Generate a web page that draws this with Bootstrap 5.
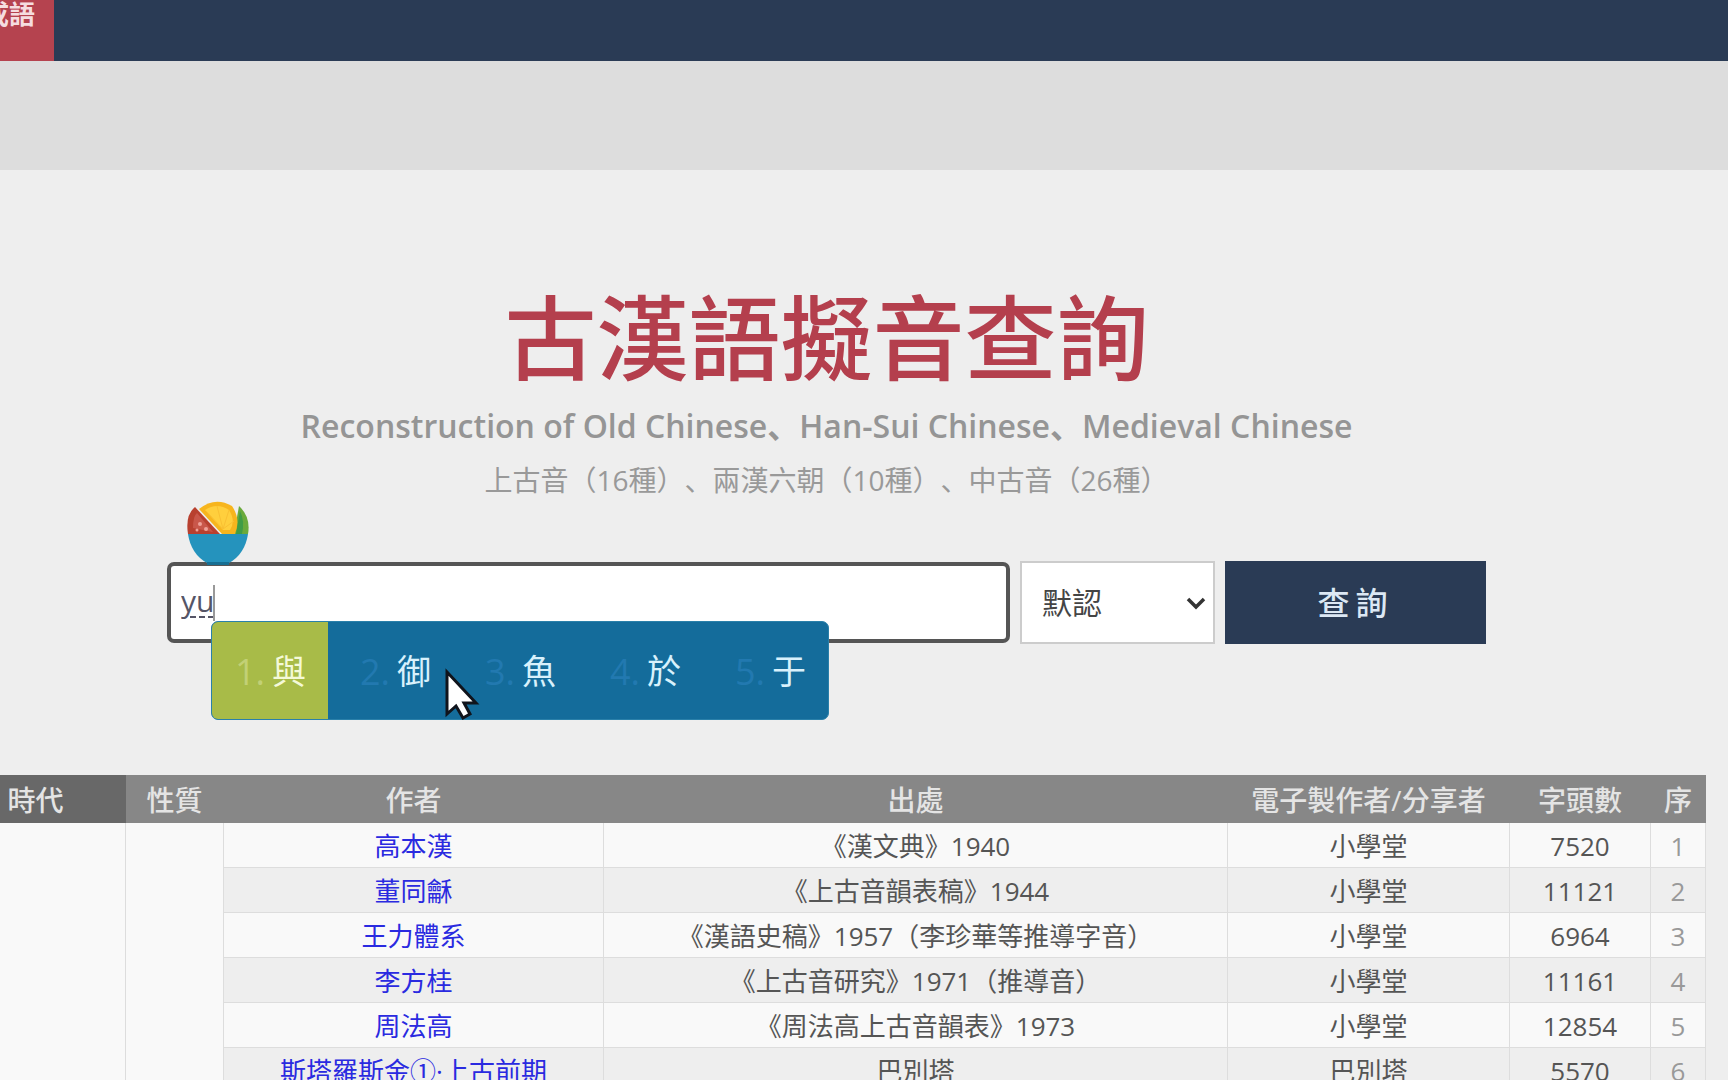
<!DOCTYPE html>
<html lang="zh-CN">
<head>
<meta charset="utf-8">
<meta name="viewport" content="width=device-width, initial-scale=1">
<title>古漢語擬音查詢</title>
<link href="https://cdn.jsdelivr.net/npm/bootstrap@5.3.0/dist/css/bootstrap.min.css" rel="stylesheet">
<style>
  body { background: #eee; color: #555; font-family: "Open Sans", "Noto Sans CJK SC", sans-serif; font-size: 26px; text-spacing-trim: space-all; }
  .topbar { background: #2a3b55; height: 61px; }
  .tab-current { background: #b5434f; color: #f5dde0; font-weight: 700; line-height: 28px; padding: 0 19px 33px 0; margin-left: -17px; }
  .subbar { background: #ddd; height: 109px; }
  .hero { padding: 108px 242px 0 167px; }
  .site-title { color: #b43f4d; font-size: 92px; line-height: 120px; font-weight: 500; }
  .site-sub { color: #959595; font-size: 32px; line-height: 56px; font-weight: 600; }
  .site-count { color: #999; font-size: 28px; line-height: 52px; }
  .search { margin: 55px 0 131px; height: 83px; gap: 10px; }
  .search .form-control { font-size: 30px; color: #556; border: 4px solid #555; border-radius: 7px; padding: 0 10px 4px; height: 81px; text-decoration: underline dashed 2px; text-underline-offset: 4px; }
  .search .form-select { width: 195px; font-size: 30px; color: #444; border: 2px solid #ccc; border-radius: 0; padding: 0 20px; background-image: url("data:image/svg+xml,%3csvg xmlns='http://www.w3.org/2000/svg' viewBox='0 0 20 20'%3e%3cpath d='M2 6l8 8 8-8' fill='none' stroke='%23333' stroke-width='3.500'/%3e%3c/svg%3e"); background-position: right 7px center; background-size: 20px 20px; }
  .search .btn { width: 261px; background: #2a3b55; color: #dce8f4; border-radius: 0; font-size: 32px; font-weight: 500; letter-spacing: 6px; }
  .bowl { left: 19px; top: -60px; width: 63px; height: 64px; }
  .text-caret { left: 46px; top: 24px; width: 2px; height: 36px; background: #999; }
  .ime { left: 44px; top: 60px; height: 99px; background: #146c9b; border: 1px solid #2a80aa; border-radius: 7px; z-index: 5; }
  .ime button { border: 0; background: none; color: #d8f1fc; font-size: 34px; gap: 6px; padding: 2px 22px 0 31px; }
  .ime button.chosen { background: #a8bb48; color: #f4f9d8; padding: 2px 22px 0; }
  .ime .num { color: #2279b0; font-size: 36px; font-weight: 400; width: 32px; }
  .ime .chosen .num { color: #c2d076; }
  .pointer { left: 277px; top: 107px; width: 36px; height: 54px; z-index: 6; }
  .sources { width: calc(100% + 43px); margin-left: -65px; table-layout: fixed; border-collapse: collapse; text-align: center; white-space: nowrap; }
  .sources th { background: #878787; color: #e4e4e4; font-size: 28px; font-weight: 500; padding: 3px 0 1px; line-height: 44px; }
  .sources th.sorted { background: #686868; padding-left: 10px; }
  .sources td { border: 1px solid #ddd; border-top: 0; padding: 3px 0 0; line-height: 41px; background: #f9f9f9; }
  .sources tr:nth-child(even) td { background: #eee; }
  .sources td.era { background: #f9f9f9 !important; }
  .sources a { color: #2a2ae0; text-decoration: none; }
  .sources td:last-child { color: #999; }
</style>
</head>
<body class="vh-100 overflow-hidden">
<nav class="topbar d-flex"><a href="#" class="tab-current text-decoration-none">成語</a></nav>
<div class="subbar"></div>
<main>
  <header class="hero text-center text-nowrap">
    <h1 class="site-title m-0">古漢語擬音查詢</h1>
    <p class="site-sub m-0">Reconstruction of Old Chinese、Han-Sui Chinese、Medieval Chinese</p>
    <p class="site-count m-0">上古音（16種）、兩漢六朝（10種）、中古音（26種）</p>
    <form class="search position-relative d-flex align-items-stretch">
      <input class="form-control flex-fill align-self-center shadow-none" type="text" value="yu" aria-label="字">
      <select class="form-select flex-shrink-0" aria-label="排序"><option>默認</option></select>
      <button class="btn flex-shrink-0" type="button">查詢</button>
      <span class="text-caret position-absolute"></span>
      <svg class="bowl position-absolute" viewBox="0 0 63 64">
        <path d="M2 33Q-1 14 9 6L34 33Z" fill="#b8402f"/>
        <path d="M7 27Q7 15 11 12L27 31Z" fill="#c9574a"/>
        <circle cx="14" cy="23" r="2" fill="#efa198"/><circle cx="20" cy="28" r="2" fill="#efa198"/><circle cx="11" cy="29" r="1.500" fill="#efa198"/>
        <path d="M48 33L53 5Q65 16 62 33Z" fill="#6aaa3c"/><path d="M50 33L54 10Q59 20 56 33Z" fill="#3f9c46"/>
        <path d="M13 8Q29-5 46 5Q55 18 49 33H36Z" fill="#f7b51d"/>
        <path d="M19 9Q31 1 43 9Q50 20 44 29H37Z" fill="#ffcf3d"/>
        <path d="M31 5L37 28M43 9L37 28M20 10L37 28M48 20L37 28" stroke="#f9c033" fill="none"/>
        <path d="M2 33H62Q59 53 43 62H21Q5 53 2 33Z" fill="#2593bd"/>
        <path d="M21 61H43V64H21Z" fill="#176f93"/>
      </svg>
      <div class="ime position-absolute d-flex overflow-hidden">
        <button type="button" class="chosen d-flex align-items-center"><span class="num">1.</span>與</button>
        <button type="button" class="d-flex align-items-center"><span class="num">2.</span>御</button>
        <button type="button" class="d-flex align-items-center"><span class="num">3.</span>魚</button>
        <button type="button" class="d-flex align-items-center"><span class="num">4.</span>於</button>
        <button type="button" class="d-flex align-items-center"><span class="num">5.</span>于</button>
      </div>
      <svg class="pointer position-absolute" viewBox="0 0 36 54"><path d="M3 4V46L12 38L19 50L26 46L20 35H32Z" fill="#fff" stroke="#10141c" stroke-width="3"/></svg>
    </form>
  </header>
  <table class="sources">
    <colgroup><col style="width:190px"><col style="width:98px"><col style="width:380px"><col><col style="width:282px"><col style="width:141px"><col style="width:55px"></colgroup>
    <thead><tr><th class="sorted">時代</th><th>性質</th><th>作者</th><th>出處</th><th>電子製作者/分享者</th><th>字頭數</th><th>序</th></tr></thead>
    <tbody>
      <tr><td class="era" rowspan="6"></td><td class="era" rowspan="6"></td><td><a href="#">高本漢</a></td><td>《漢文典》1940</td><td>小學堂</td><td>7520</td><td>1</td></tr>
      <tr><td><a href="#">董同龢</a></td><td>《上古音韻表稿》1944</td><td>小學堂</td><td>11121</td><td>2</td></tr>
      <tr><td><a href="#">王力體系</a></td><td>《漢語史稿》1957（李珍華等推導字音）</td><td>小學堂</td><td>6964</td><td>3</td></tr>
      <tr><td><a href="#">李方桂</a></td><td>《上古音研究》1971（推導音）</td><td>小學堂</td><td>11161</td><td>4</td></tr>
      <tr><td><a href="#">周法高</a></td><td>《周法高上古音韻表》1973</td><td>小學堂</td><td>12854</td><td>5</td></tr>
      <tr><td><a href="#">斯塔羅斯金①·上古前期</a></td><td>巴別塔</td><td>巴別塔</td><td>5570</td><td>6</td></tr>
    </tbody>
  </table>
</main>
<script src="https://cdn.jsdelivr.net/npm/bootstrap@5.3.0/dist/js/bootstrap.bundle.min.js"></script>
</body>
</html>
